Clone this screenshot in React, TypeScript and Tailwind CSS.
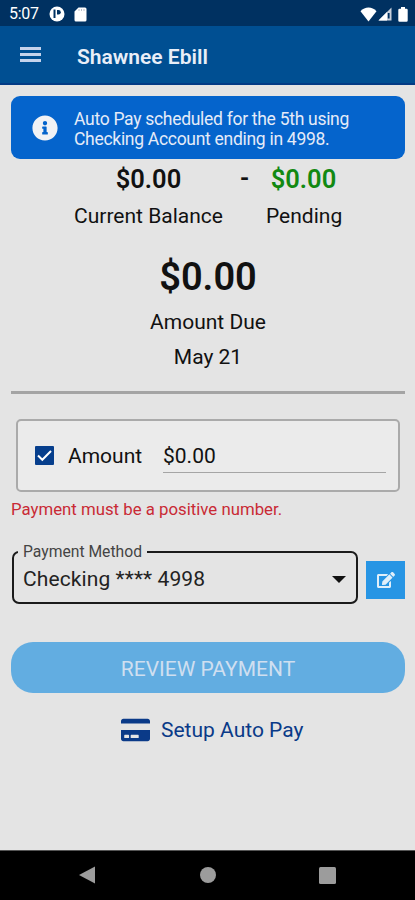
import React from 'react';
import { FaCreditCard, FaEdit, FaInfoCircle } from 'react-icons/fa';

const StatusBar: React.FC = () => (
  <div className="flex h-[26px] items-center bg-[#003161] pl-[9px] pr-[7px] pt-[2px] text-white">
    <span className="w-[40px] text-[16px] leading-[18px] tracking-[-0.3px]">5:07</span>
    <svg className="h-[16px] w-[16px]" viewBox="0 0 16 16">
      <circle cx="8" cy="8" r="7.5" fill="#fff" />
      <path d="M5.5 3.5v8.5" fill="none" stroke="#003161" strokeWidth="2" />
      <path d="M8 4v4.500h1.500a2.200 2.200 0 0 0 0-4.500z" fill="#003161" />
    </svg>
    <svg className="ml-[9px] h-[15px] w-[13px]" viewBox="0 0 13 15">
      <path d="M4.5 0.5H11a1.5 1.5 0 0 1 1.5 1.5v11a1.5 1.5 0 0 1-1.5 1.5H2A1.5 1.5 0 0 1 .5 13V4.5z" fill="#fff" />
      <path d="M5 2v2M7.5 2v2M10 2v2" stroke="#b9bfca" />
    </svg>
    <svg className="ml-auto h-[15px] w-[17px]" viewBox="0 0 17 15">
      <path d="M8.5 14.5L.5 4.2C2.8 1.8 5.5.6 8.5.6s5.7 1.2 8 3.6z" fill="#fff" />
    </svg>
    <svg className="ml-[1px] h-[14px] w-[14px]" viewBox="0 0 14 14">
      <path d="M13.5.5V13.500H.5z" fill="#c8d0dc" />
      <path d="M9 5v8.500H.5z" fill="#fff" />
      <path d="M10.7 6v5.500" stroke="#003161" strokeWidth="1.8" />
    </svg>
    <svg className="ml-[6px] h-[15px] w-[10px]" viewBox="0 0 10 15">
      <path d="M3 0h4v1.800h1.500a1.200 1.200 0 0 1 1.200 1.200v10.500a1.200 1.200 0 0 1-1.200 1.200h-7A1.200 1.200 0 0 1 .3 13.500V3a1.200 1.200 0 0 1 1.200-1.200H3z" fill="#fff" />
    </svg>
  </div>
);

const Header: React.FC = () => (
  <header className="flex h-[59px] items-center border-b-2 border-[#033b85] bg-[#004f92] pl-5 text-[#e9eef8]">
    <button aria-label="Menu" className="flex w-[21px] flex-col gap-[3px]">
      <span className="h-[3px] bg-[#c5d3ec]" />
      <span className="h-[3px] bg-[#c5d3ec]" />
      <span className="h-[3px] bg-[#c5d3ec]" />
    </button>
    <h1 className="ml-[36px] pt-[4px] text-[21px] font-semibold leading-[26px]">Shawnee Ebill</h1>
  </header>
);

const Balances: React.FC = () => (
  <div className="flex pl-[63px] pt-px">
    <div className="w-[149px] text-center">
      <p className="text-[25.5px] font-semibold leading-[38px]">$0.00</p>
      <p className="whitespace-nowrap text-[21px] leading-[36px]">Current Balance</p>
    </div>
    <p className="w-[43px] text-center text-[25px] font-semibold leading-[38px]">-</p>
    <div className="w-[75px] text-center">
      <p className="text-[25.5px] font-semibold leading-[38px] text-[#128912]">$0.00</p>
      <p className="text-[21px] leading-[36px]">Pending</p>
    </div>
  </div>
);

const App: React.FC = () => {
  return (
    <div className="flex h-[900px] w-[415px] flex-col overflow-hidden bg-[#e4e4e4] font-['Roboto',sans-serif] text-[#111]">
      <StatusBar />
      <Header />

      <main className="flex-1 pl-[11px] pr-[10px] pt-[11px]">
        <div className="flex h-[63px] items-center rounded-[9px] bg-[#0564cc] pl-[21px] text-[#e4ebf8]">
          <FaInfoCircle className="h-[26px] w-[26px] text-[#f1f2f5]" />
          <p className="ml-4 whitespace-nowrap pt-[3px] text-[17.5px] leading-[20px] tracking-[-0.29px]">
            Auto Pay scheduled for the 5th using
            <br />
            Checking Account ending in 4998.
          </p>
        </div>

        <Balances />

        <div className="mt-[18px] text-center">
          <p className="text-[38px] font-semibold leading-[50px]">$0.00</p>
          <p className="mt-[3px] text-[21px] leading-[35px]">Amount Due</p>
          <p className="text-[21px] leading-[35px]">May 21</p>
        </div>

        <hr className="mt-[16px] border-t-[3px] border-[#a4a4a4]" />

        <div className="ml-[5px] mr-[5px] mt-[25px] flex h-[73px] items-center rounded-[5px] border-2 border-[#aaa] bg-[#ebebeb] pl-[17px]">
          <svg className="h-[19px] w-[19px]" viewBox="0 0 19 19">
            <rect width="19" height="19" rx="1" fill="#063e8c" />
            <path d="M3 9.5l4.3 4.3L16 5" fill="none" stroke="#fff" strokeWidth="2" />
          </svg>
          <label className="ml-[14px] w-[95px] pt-[3px] text-[21px]">Amount</label>
          <div className="mt-px h-[34px] w-[223px] border-b border-[#a5a5a5] text-[21px] leading-[35px]">$0.00</div>
        </div>

        <p className="mt-[7px] text-[16.8px] leading-[20px] text-[#c92a35]">Payment must be a positive number.</p>

        <div className="mt-[22px] flex items-start">
          <fieldset className="ml-px h-[63px] w-[346px] rounded-[7px] border-2 border-[#1b1b1b] pl-[4px]">
            <legend className="px-[5px] pt-px text-[15.7px] leading-[20px] text-[#444]">Payment Method</legend>
            <div className="flex items-center pl-[5px] pr-[10px]">
              <span className="text-[21px] leading-[34px] tracking-[0.1px] text-[#222]">Checking **** 4998</span>
              <svg className="ml-auto h-[7px] w-[14px]" viewBox="0 0 14 7">
                <path d="M0 0h14L7 7z" fill="#111" />
              </svg>
            </div>
          </fieldset>
          <button aria-label="Edit" className="ml-[8px] mt-[20px] flex h-[38px] w-[39px] items-center justify-center bg-[#2795e4] text-[#e0effa]">
            <FaEdit className="h-[18px] w-[18px]" />
          </button>
        </div>

        <button className="mt-[38px] h-[51px] w-full rounded-[22px] bg-[#62ade1] pt-[4px] text-[21px] text-[#cfdff0]">
          REVIEW PAYMENT
        </button>

        <a className="mt-[18px] flex items-center pl-[110px] text-[#0a3a88]">
          <FaCreditCard className="h-[28px] w-[29px]" />
          <span className="ml-[11px] pt-px text-[21px] leading-[36px]">Setup Auto Pay</span>
        </a>
      </main>

      <nav className="h-[50px] border-t border-[#555] bg-black">
        <svg className="h-full w-full" viewBox="0 0 415 49" fill="#9c9c9c">
          <path d="M79 24L95 15.5v17z" />
          <circle cx="208" cy="24" r="8" />
          <rect x="319" y="16" width="17" height="17" rx="1.5" />
        </svg>
      </nav>
    </div>
  );
};

export default App;
